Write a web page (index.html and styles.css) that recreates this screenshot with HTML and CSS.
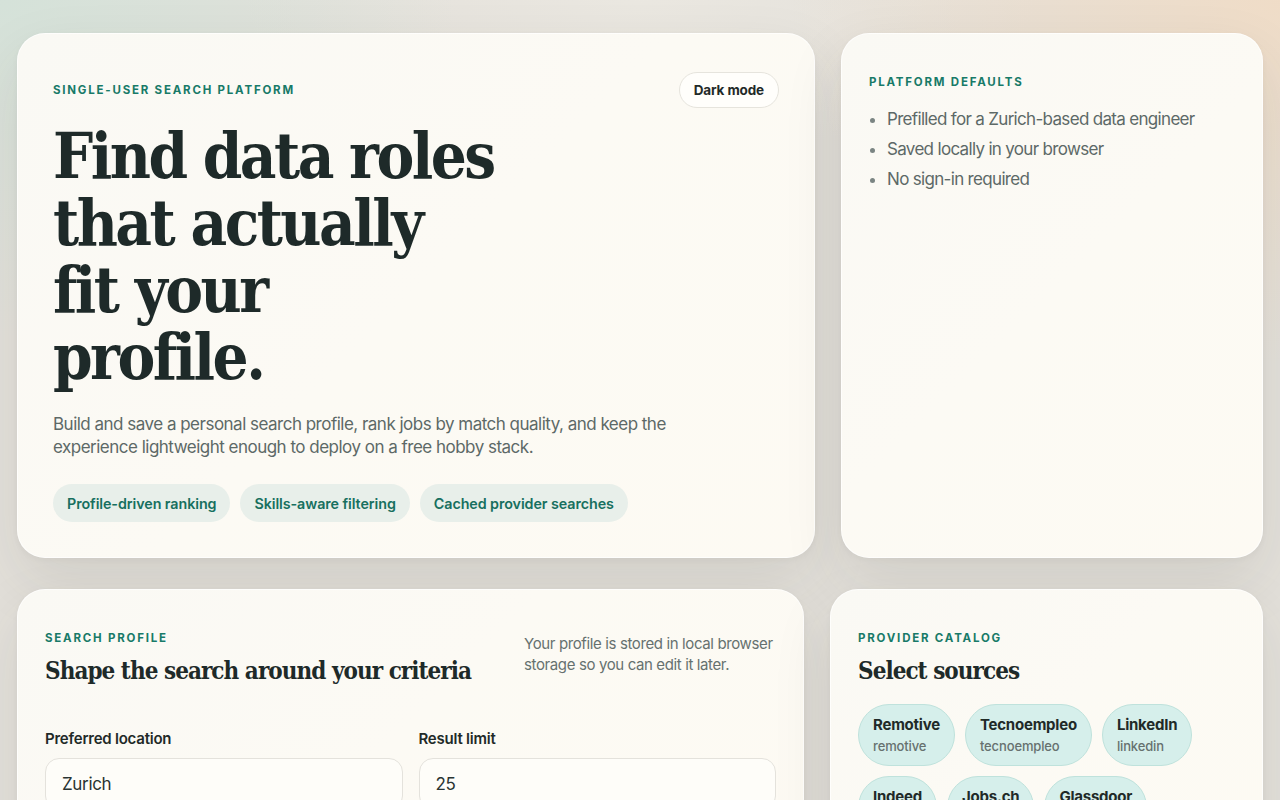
FILE: index.html
```html
<!DOCTYPE html>
<html lang="en">
<head>
<meta charset="utf-8">
<title>Job search platform</title>
<link rel="stylesheet" href="styles.css">
</head>
<body>
<main class="page">
  <section class="row row-top">
    <article class="card hero">
      <div class="hero-top">
        <p class="eyebrow">Single-user search platform</p>
        <button class="mode-btn" type="button">Dark mode</button>
      </div>
      <h1 class="hero-title">Find data roles<br>that actually<br>fit your<br>profile.</h1>
      <p class="hero-lead">Build and save a personal search profile, rank jobs by match quality, and keep the experience lightweight enough to deploy on a free hobby stack.</p>
      <ul class="chips">
        <li class="chip">Profile-driven ranking</li>
        <li class="chip">Skills-aware filtering</li>
        <li class="chip">Cached provider searches</li>
      </ul>
    </article>
    <aside class="card defaults">
      <p class="eyebrow">Platform defaults</p>
      <ul class="bullets">
        <li>Prefilled for a Zurich-based data engineer</li>
        <li>Saved locally in your browser</li>
        <li>No sign-in required</li>
      </ul>
    </aside>
  </section>
  <section class="row row-bottom">
    <article class="card profile">
      <div class="profile-head">
        <div>
          <p class="eyebrow">Search profile</p>
          <h2 class="section-title">Shape the search around your criteria</h2>
        </div>
        <p class="profile-note">Your profile is stored in local browser storage so you can edit it later.</p>
      </div>
      <div class="form-grid">
        <label class="field">
          <span class="field-label">Preferred location</span>
          <input class="field-input" type="text" value="Zurich">
        </label>
        <label class="field">
          <span class="field-label">Result limit</span>
          <input class="field-input" type="text" value="25">
        </label>
      </div>
    </article>
    <article class="card catalog">
      <p class="eyebrow">Provider catalog</p>
      <h2 class="section-title">Select sources</h2>
      <ul class="providers">
        <li class="provider"><span class="p-name">Remotive</span><span class="p-slug">remotive</span></li>
        <li class="provider"><span class="p-name">Tecnoempleo</span><span class="p-slug">tecnoempleo</span></li>
        <li class="provider"><span class="p-name">LinkedIn</span><span class="p-slug">linkedin</span></li>
        <li class="provider"><span class="p-name">Indeed</span><span class="p-slug">indeed</span></li>
        <li class="provider"><span class="p-name">Jobs.ch</span><span class="p-slug">jobs.ch</span></li>
        <li class="provider"><span class="p-name">Glassdoor</span><span class="p-slug">glassdoor</span></li>
      </ul>
    </article>
  </section>
</main>
</body>
</html>
```

FILE: styles.css
```css
* { box-sizing: border-box; }

html, body {
  margin: 0;
  padding: 0;
}

body {
  min-height: 100vh;
  font-family: "Inter", "Noto Sans", sans-serif;
  color: #1f2a28;
  background:
    radial-gradient(ellipse 650px 480px at 0% 0%, rgba(212, 226, 217, 0.95), rgba(212, 226, 217, 0) 70%),
    radial-gradient(ellipse 700px 520px at 100% 0%, rgba(240, 220, 198, 0.95), rgba(240, 220, 198, 0) 70%),
    radial-gradient(ellipse 500px 200px at 50% 0%, rgba(236, 233, 226, 0.8), rgba(236, 233, 226, 0) 80%),
    #e3e0da;
  overflow: hidden;
}

.page {
  padding: 33px 17px 40px;
  display: flex;
  flex-direction: column;
  gap: 31px;
}

.row {
  display: grid;
  gap: 26px;
}

.row-top { grid-template-columns: 1fr 422px; }
.row-bottom { grid-template-columns: 1fr 433px; }

.card {
  background: linear-gradient(135deg, #faf9f4 0%, #fcfaf4 50%, #fdfaf3 100%);
  border: 1px solid rgba(255, 255, 255, 0.7);
  border-radius: 28px;
  box-shadow: 0 24px 60px rgba(60, 55, 45, 0.10), 0 2px 6px rgba(60, 55, 45, 0.04);
}

.eyebrow {
  margin: 0;
  font-size: 11.5px;
  font-weight: 700;
  letter-spacing: 0.155em;
  text-transform: uppercase;
  color: #187a68;
  line-height: 16px;
}

/* hero */
.hero {
  padding: 38px 35px 35px;
}

.hero-top {
  display: flex;
  justify-content: space-between;
  align-items: center;
}

.mode-btn {
  height: 36px;
  padding: 0 14px;
  border-radius: 18px;
  border: 1px solid #e6e4dd;
  background: #fffefb;
  font-family: inherit;
  font-size: 13.5px;
  font-weight: 700;
  color: #1f2a28;
  letter-spacing: -0.01em;
}

.hero-title {
  margin: 15px 0 0;
  font-family: "DejaVu Serif Condensed", "DejaVu Serif", serif;
  font-stretch: condensed;
  font-weight: 700;
  font-size: 63px;
  line-height: 67px;
  letter-spacing: -0.04em;
  color: #1e2a29;
}

.hero-lead {
  margin: 22px 0 0;
  max-width: 640px;
  font-size: 17px;
  line-height: 23px;
  color: #5d6967;
  letter-spacing: -0.03em;
}

.chips {
  list-style: none;
  margin: 25px 0 0;
  padding: 0;
  display: flex;
  gap: 10px;
}

.chip {
  height: 38px;
  display: flex;
  align-items: center;
  padding: 0 14px;
  border-radius: 19px;
  background: #e8efea;
  color: #17705f;
  font-size: 14.3px;
  font-weight: 600;
  letter-spacing: -0.005em;
}

/* defaults */
.defaults {
  padding: 40px 27px 28px;
}

.bullets {
  margin: 14px 0 0;
  padding-left: 18px;
  color: #5d6967;
  font-size: 17px;
  line-height: 30px;
  letter-spacing: -0.04em;
}

.bullets li::marker { color: #7b8583; }

/* profile */
.profile {
  padding: 40px 27px 28px;
}

.profile-head {
  display: flex;
  justify-content: space-between;
  align-items: flex-start;
  gap: 24px;
}

.section-title {
  margin: 9px 0 0;
  font-family: "DejaVu Serif Condensed", "DejaVu Serif", serif;
  font-stretch: condensed;
  font-weight: 700;
  font-size: 24px;
  line-height: 32px;
  letter-spacing: -0.04em;
  color: #1e2a29;
}

.profile-note {
  margin: 3px 0 0;
  width: 252px;
  font-size: 15px;
  line-height: 21px;
  color: #66716f;
  letter-spacing: -0.025em;
}

.form-grid {
  margin-top: 42px;
  display: grid;
  grid-template-columns: 1fr 1fr;
  gap: 16px;
}

.field {
  display: flex;
  flex-direction: column;
  gap: 9px;
}

.field-label {
  font-size: 15px;
  font-weight: 600;
  color: #1f2a28;
  line-height: 20px;
  letter-spacing: -0.015em;
}

.field-input {
  height: 52px;
  padding: 0 16px;
  border: 1px solid #e4e2dc;
  border-radius: 14px;
  background: #fefdf9;
  font-family: inherit;
  font-size: 17px;
  color: #2a3432;
  letter-spacing: -0.02em;
}

/* catalog */
.catalog {
  padding: 40px 27px 28px;
}

.providers {
  list-style: none;
  margin: 17px 0 0;
  padding: 0;
  display: flex;
  flex-wrap: wrap;
  gap: 10px 10px;
}

.provider {
  display: flex;
  flex-direction: column;
  justify-content: center;
  height: 62px;
  padding: 0 14px;
  border-radius: 31px;
  background: #d6efeb;
  border: 1px solid #bfe2dc;
}

.p-name {
  font-size: 15px;
  font-weight: 700;
  color: #1f2a28;
  line-height: 20px;
  letter-spacing: -0.015em;
}

.p-slug {
  font-size: 13px;
  font-weight: 500;
  color: #66716f;
  line-height: 18px;
  margin-top: 2px;
  letter-spacing: -0.01em;
}
```
